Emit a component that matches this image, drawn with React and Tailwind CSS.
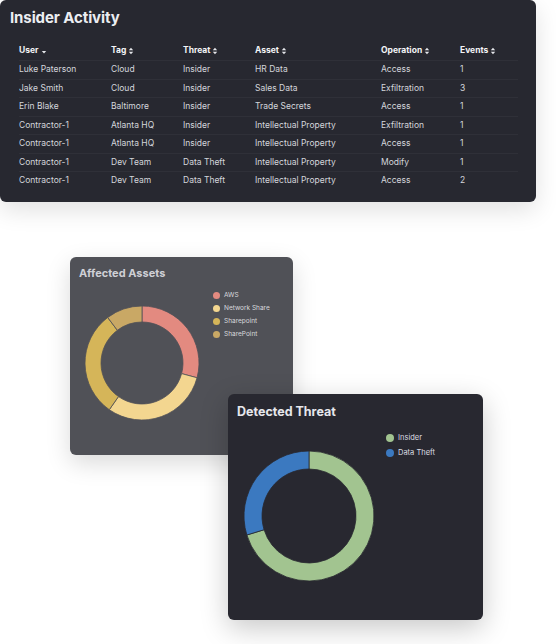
import React from 'react';

const rows = [
  ['Luke Paterson', 'Cloud', 'Insider', 'HR Data', 'Access', '1'],
  ['Jake Smith', 'Cloud', 'Insider', 'Sales Data', 'Exfiltration', '3'],
  ['Erin Blake', 'Baltimore', 'Insider', 'Trade Secrets', 'Access', '1'],
  ['Contractor-1', 'Atlanta HQ', 'Insider', 'Intellectual Property', 'Exfiltration', '1'],
  ['Contractor-1', 'Atlanta HQ', 'Insider', 'Intellectual Property', 'Access', '1'],
  ['Contractor-1', 'Dev Team', 'Data Theft', 'Intellectual Property', 'Modify', '1'],
  ['Contractor-1', 'Dev Team', 'Data Theft', 'Intellectual Property', 'Access', '2'],
];

const headers = ['User', 'Tag', 'Threat', 'Asset', 'Operation', 'Events'];
const cols = 'grid grid-cols-[92px_72px_72px_126px_79px_58px]';

const SortIcon = ({ down }) => (
  <svg width="6" height="8" viewBox="0 0 6 8" className="ml-[2px]">
    {down ? (
      <path d="M0.8 4 L5.2 4 L3 6.5 Z" fill="#e5e7eb" />
    ) : (
      <>
        <path d="M0.8 3.3 L5.2 3.3 L3 0.8 Z" fill="#e5e7eb" />
        <path d="M0.8 4.7 L5.2 4.7 L3 7.2 Z" fill="#e5e7eb" />
      </>
    )}
  </svg>
);

const arc = (cx, cy, ro, ri, a0, a1) => {
  const p = (r, a) => {
    const t = ((a - 90) * Math.PI) / 180;
    return [cx + r * Math.cos(t), cy + r * Math.sin(t)];
  };
  const large = a1 - a0 > 180 ? 1 : 0;
  const [x0, y0] = p(ro, a0);
  const [x1, y1] = p(ro, a1);
  const [x2, y2] = p(ri, a1);
  const [x3, y3] = p(ri, a0);
  return `M${x0} ${y0} A${ro} ${ro} 0 ${large} 1 ${x1} ${y1} L${x2} ${y2} A${ri} ${ri} 0 ${large} 0 ${x3} ${y3} Z`;
};

const Donut = ({ size, ro, ri, segments, border }) => {
  const c = size / 2;
  let start = 0;
  return (
    <svg width={size} height={size} viewBox={`0 0 ${size} ${size}`}>
      {segments.map(([deg, color], i) => {
        const d = arc(c, c, ro, ri, start, start + deg);
        start += deg;
        return <path key={i} d={d} fill={color} stroke={border} strokeWidth="0.8" />;
      })}
    </svg>
  );
};

const Legend = ({ items, dot, text, gap }) => (
  <div className={`flex flex-col ${gap}`}>
    {items.map(([label, color]) => (
      <div key={label} className="flex items-center gap-[4px]">
        <span className={`${dot} rounded-full`} style={{ background: color }} />
        <span className={text}>{label}</span>
      </div>
    ))}
  </div>
);

export default function App() {
  return (
    <div className="w-[556px] h-[644px] bg-white overflow-hidden font-['Inter','Liberation_Sans',sans-serif]">
      <div className="w-[536px] h-[202px] bg-[#272830] rounded-[6px] shadow-[0_8px_24px_rgba(0,0,0,0.12)] pt-[9px]">
        <h1 className="pl-[10px] text-[15px] leading-[18px] font-bold text-[#eceef2] tracking-[-0.1px]">Insider Activity</h1>
        <div className="ml-[19px] mt-[14px] w-[499px]">
          <div className={`${cols} h-[19px] items-center text-[8.5px] font-bold text-[#f3f4f6]`}>
            {headers.map((h, i) => (
              <div key={h} className="flex items-center">
                {h}
                <SortIcon down={i === 0} />
              </div>
            ))}
          </div>
          {rows.map((r, i) => (
            <div key={i} className={`${cols} h-[18.5px] items-center border-t border-[#2f3038] text-[8.5px] text-[#d4d6dc]`}>
              {r.map((c, j) => (
                <div key={j}>{c}</div>
              ))}
            </div>
          ))}
        </div>
      </div>

      <div className="relative ml-[70px] mt-[55px] w-[223px] h-[198px]">
        <div className="w-[223px] h-[198px] bg-[#505157] rounded-[6px] shadow-[0_8px_24px_rgba(0,0,0,0.15)] pt-[9px] pl-[9px]">
          <h2 className="text-[11px] leading-[14px] font-bold text-[#cfd0d6]">Affected Assets</h2>
          <div className="flex">
            <div className="mt-[25px] ml-[5px]">
              <Donut
                size={116}
                ro={57}
                ri={41}
                border="#505157"
                segments={[
                  [105, '#e38a80'],
                  [110, '#f3d690'],
                  [108, '#d5b559'],
                  [37, '#c9a865'],
                ]}
              />
            </div>
            <div className="ml-[13px] mt-[11px]">
              <Legend
                gap="gap-[4.5px]"
                dot="w-[7px] h-[7px]"
                text="text-[6.5px] leading-[8.5px] text-[#d8d9de]"
                items={[
                  ['AWS', '#e38a80'],
                  ['Network Share', '#f3d690'],
                  ['Sharepoint', '#d5b559'],
                  ['SharePoint', '#c9a865'],
                ]}
              />
            </div>
          </div>
        </div>

        <div className="absolute left-[158px] top-[137px] w-[255px] h-[226px] bg-[#282830] rounded-[6px] shadow-[0_8px_28px_rgba(0,0,0,0.22)] pt-[10px] pl-[9px]">
          <h2 className="text-[12.5px] leading-[16px] font-bold text-[#e6e7ec]">Detected Threat</h2>
          <div className="flex">
            <div className="mt-[30px] ml-[6px]">
              <Donut
                size={132}
                ro={65}
                ri={47}
                border="#282830"
                segments={[
                  [253, '#a2c490'],
                  [107, '#3b79c0'],
                ]}
              />
            </div>
            <div className="ml-[11px] mt-[13px]">
              <Legend
                gap="gap-[6px]"
                dot="w-[8px] h-[8px]"
                text="text-[7.5px] leading-[9px] text-[#dcdde2]"
                items={[
                  ['Insider', '#a2c490'],
                  ['Data Theft', '#3b79c0'],
                ]}
              />
            </div>
          </div>
        </div>
      </div>
    </div>
  );
}
